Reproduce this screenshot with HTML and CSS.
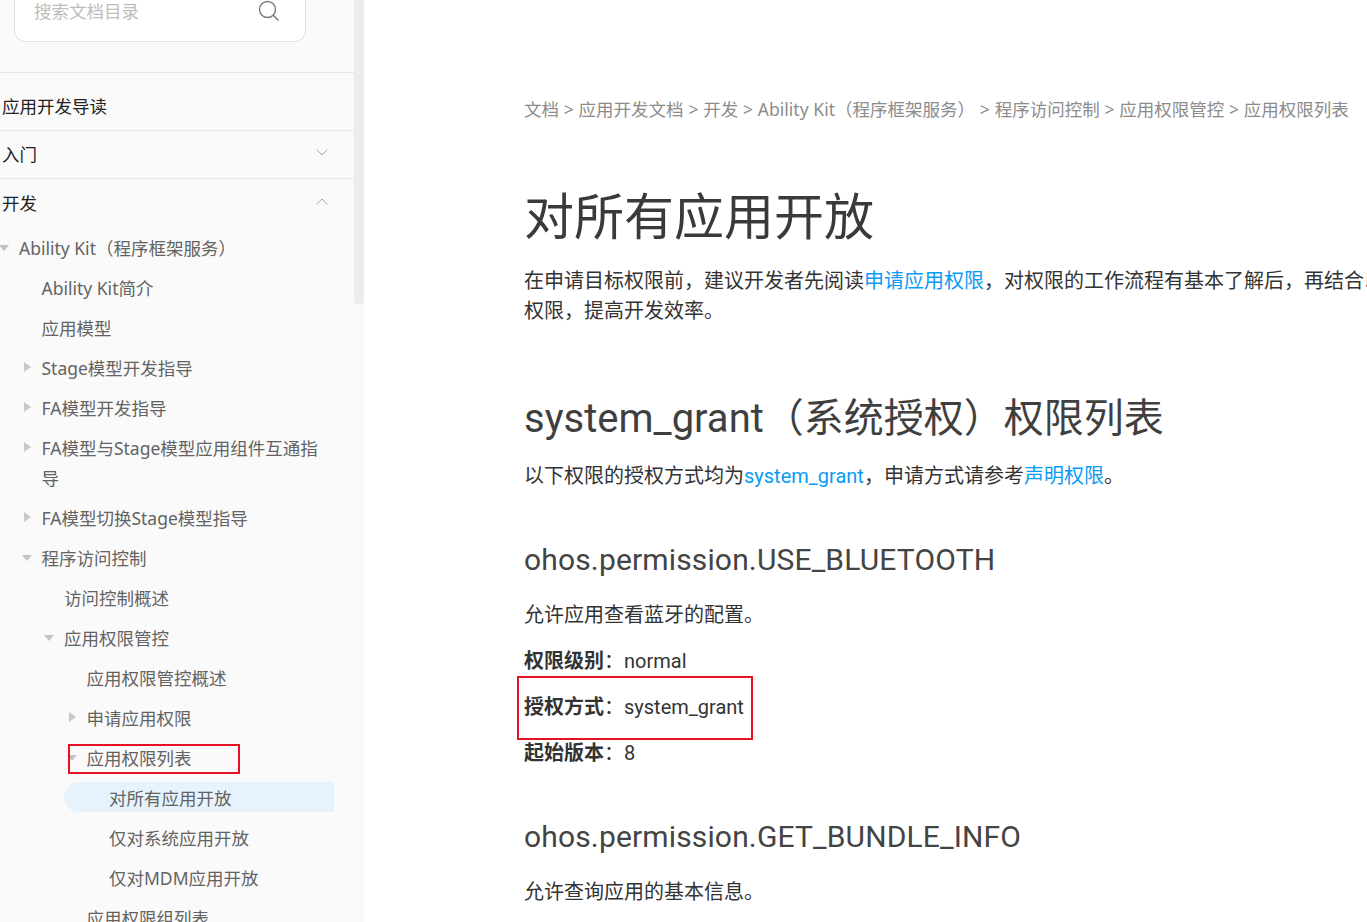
FILE: index.html
```html
<!DOCTYPE html>
<html lang="zh-CN">
<head>
<meta charset="utf-8">
<title>对所有应用开放</title>
<link rel="stylesheet" href="styles.css">
</head>
<body>
<div class="page">
  <aside class="sidebar">
    <div class="search-wrap">
      <div class="search">
        <span class="search-text">搜索文档目录</span>
        <svg class="search-icon" width="22" height="22" viewBox="0 0 22 22"><circle cx="9.5" cy="9.5" r="8" fill="none" stroke="#7a7a7a" stroke-width="1.4"/><path d="M15.2 15.2L20.5 20.5" stroke="#7a7a7a" stroke-width="1.6" fill="none"/></svg>
      </div>
    </div>
    <div class="top-item first">应用开发导读</div>
    <div class="top-item">入门<svg class="chev" width="12" height="7" viewBox="0 0 12 7"><path d="M.5.5L6 6l5.5-5.5" fill="none" stroke="#a8a8a8"/></svg></div>
    <div class="top-item open">开发<svg class="chev" width="12" height="7" viewBox="0 0 12 7"><path d="M.5 6.5L6 1l5.5 5.5" fill="none" stroke="#a8a8a8"/></svg></div>
    <ul class="tree">
      <li class="row l0"><i class="tri down"></i>Ability Kit（程序框架服务）</li>
      <li class="row l1">Ability Kit简介</li>
      <li class="row l1">应用模型</li>
      <li class="row l1"><i class="tri right"></i>Stage模型开发指导</li>
      <li class="row l1"><i class="tri right"></i>FA模型开发指导</li>
      <li class="row l1"><i class="tri right"></i>FA模型与Stage模型应用组件互通指导</li>
      <li class="row l1"><i class="tri right"></i>FA模型切换Stage模型指导</li>
      <li class="row l1"><i class="tri down"></i>程序访问控制</li>
      <li class="row l2">访问控制概述</li>
      <li class="row l2"><i class="tri down"></i>应用权限管控</li>
      <li class="row l3">应用权限管控概述</li>
      <li class="row l3"><i class="tri right"></i>申请应用权限</li>
      <li class="row l3"><i class="tri down"></i>应用权限列表<span class="mark mark-nav"></span></li>
      <li class="row l4 active">对所有应用开放</li>
      <li class="row l4">仅对系统应用开放</li>
      <li class="row l4">仅对MDM应用开放</li>
      <li class="row l3">应用权限组列表</li>
    </ul>
    <div class="scroll-thumb"></div>
  </aside>
  <main class="content">
    <div class="crumbs">文档 &gt; 应用开发文档 &gt; 开发 &gt; Ability Kit（程序框架服务） &gt; 程序访问控制 &gt; 应用权限管控 &gt; 应用权限列表</div>
    <h1>对所有应用开放</h1>
    <p class="intro">在申请目标权限前，建议开发者先阅读<a>申请应用权限</a>，对权限的工作流程有基本了解后，再结合以下<br>权限，提高开发效率。</p>
    <h2>system_grant（系统授权）权限列表</h2>
    <p class="lead">以下权限的授权方式均为<a>system_grant</a>，申请方式请参考<a>声明权限</a>。</p>
    <h3>ohos.permission.USE_BLUETOOTH</h3>
    <p class="desc">允许应用查看蓝牙的配置。</p>
    <p class="attr"><b>权限级别</b>：<span class="val">normal</span></p>
    <p class="attr marked"><b>授权方式</b>：<span class="val">system_grant</span><span class="mark mark-attr"></span></p>
    <p class="attr"><b>起始版本</b>：<span class="val">8</span></p>
    <h3 class="second">ohos.permission.GET_BUNDLE_INFO</h3>
    <p class="desc">允许查询应用的基本信息。</p>
  </main>
</div>
</body>
</html>
```
FILE: styles.css
```css
* { box-sizing: border-box; }
html, body { margin: 0; height: 100%; overflow: hidden; background: #fff; }
body { font-family: "Noto Sans", "Noto Sans CJK SC", sans-serif; color: #333; }
.page { display: flex; width: 1367px; height: 922px; overflow: hidden; }
.sidebar { position: relative; flex: 0 0 364px; height: 922px; overflow: hidden; background: #fafafa; font-size: 17.5px; }
.search-wrap { height: 73px; border-bottom: 1px solid #e6e6e6; padding-left: 14px; }
.search { display: flex; align-items: center; justify-content: space-between; width: 292px; height: 42px; padding: 0 25px 19px 19px; background: #fff; border: 1px solid #e3e3e3; border-top: 0; border-radius: 0 0 12px 12px; }
.search-text { color: #bdbdbd; line-height: 24px; }
.search-icon { flex: none; }
.top-item { display: flex; align-items: center; justify-content: space-between; height: 48px; padding: 0 36px 2px 2px; border-bottom: 1px solid #e6e6e6; color: #222; }
.top-item.first { height: 58px; padding-top: 10px; }
.top-item.open { border-bottom: 0; height: 50px; padding-bottom: 4px; }
.chev { margin-top: -2px; }
.tree { list-style: none; margin: 0; padding: 3px 30px 0 0; }
.row { position: relative; line-height: 30px; padding-top: 1px; margin-bottom: 9px; color: #636363; }
.l0 { padding-left: 19px; }
.l1 { padding-left: 41.5px; }
.l2 { padding-left: 64px; }
.l3 { padding-left: 86.5px; }
.l4 { padding-left: 109px; }
.active { margin-left: 64px; margin-bottom: 10px; padding-left: 45px; height: 30px; background: #e6f3fc; border-radius: 15px 0 0 15px; }
.tri { position: absolute; width: 0; height: 0; border-style: solid; border-color: transparent; }
.tri.down { border-width: 6px 5px 0; border-top-color: #c2c2c2; margin-left: -20px; top: 13px; }
.tri.right { border-width: 5px 0 5px 7px; border-left-color: #c8c8d0; margin-left: -18px; top: 10px; }
.scroll-thumb { position: absolute; top: 0; right: 0; width: 10px; height: 305px; background: #ececec; border-radius: 0 0 5px 5px; }
.mark { position: absolute; border: 2px solid #e60f23; pointer-events: none; }
.mark-nav { left: 68px; top: 2px; width: 172px; height: 30px; }
.mark-attr { left: -7px; top: -16px; width: 236px; height: 64px; }
.content { flex: 1; min-width: 0; padding: 94px 0 0 160px; white-space: nowrap; overflow: hidden; font-family: Roboto, "Noto Sans CJK SC", sans-serif; }
.content p { margin: 0; font-size: 20px; line-height: 30px; }
.content a { color: #0a9bf5; }
.crumbs { font-family: "Noto Sans", "Noto Sans CJK SC", sans-serif; font-size: 17.5px; line-height: 30px; color: #8c8c8c; word-spacing: 0.25px; }
h1 { margin: 61px 0 0; font-size: 50px; line-height: 66px; font-weight: 400; color: #3a3a3a; }
.intro { margin-top: 15px !important; }
h2 { margin: 66px 0 0; font-size: 40px; line-height: 54px; font-weight: 400; color: #3f3f3f; }
.lead { margin-top: 15px !important; }
h3 { margin: 49px 0 0; font-size: 30px; line-height: 40px; font-weight: 400; letter-spacing: 0.15px; color: #444; }
.desc { margin-top: 20px !important; }
.attr { position: relative; margin-top: 16px !important; }
.attr b { font-weight: 700; }
h3.second { margin-top: 49px; }
```
